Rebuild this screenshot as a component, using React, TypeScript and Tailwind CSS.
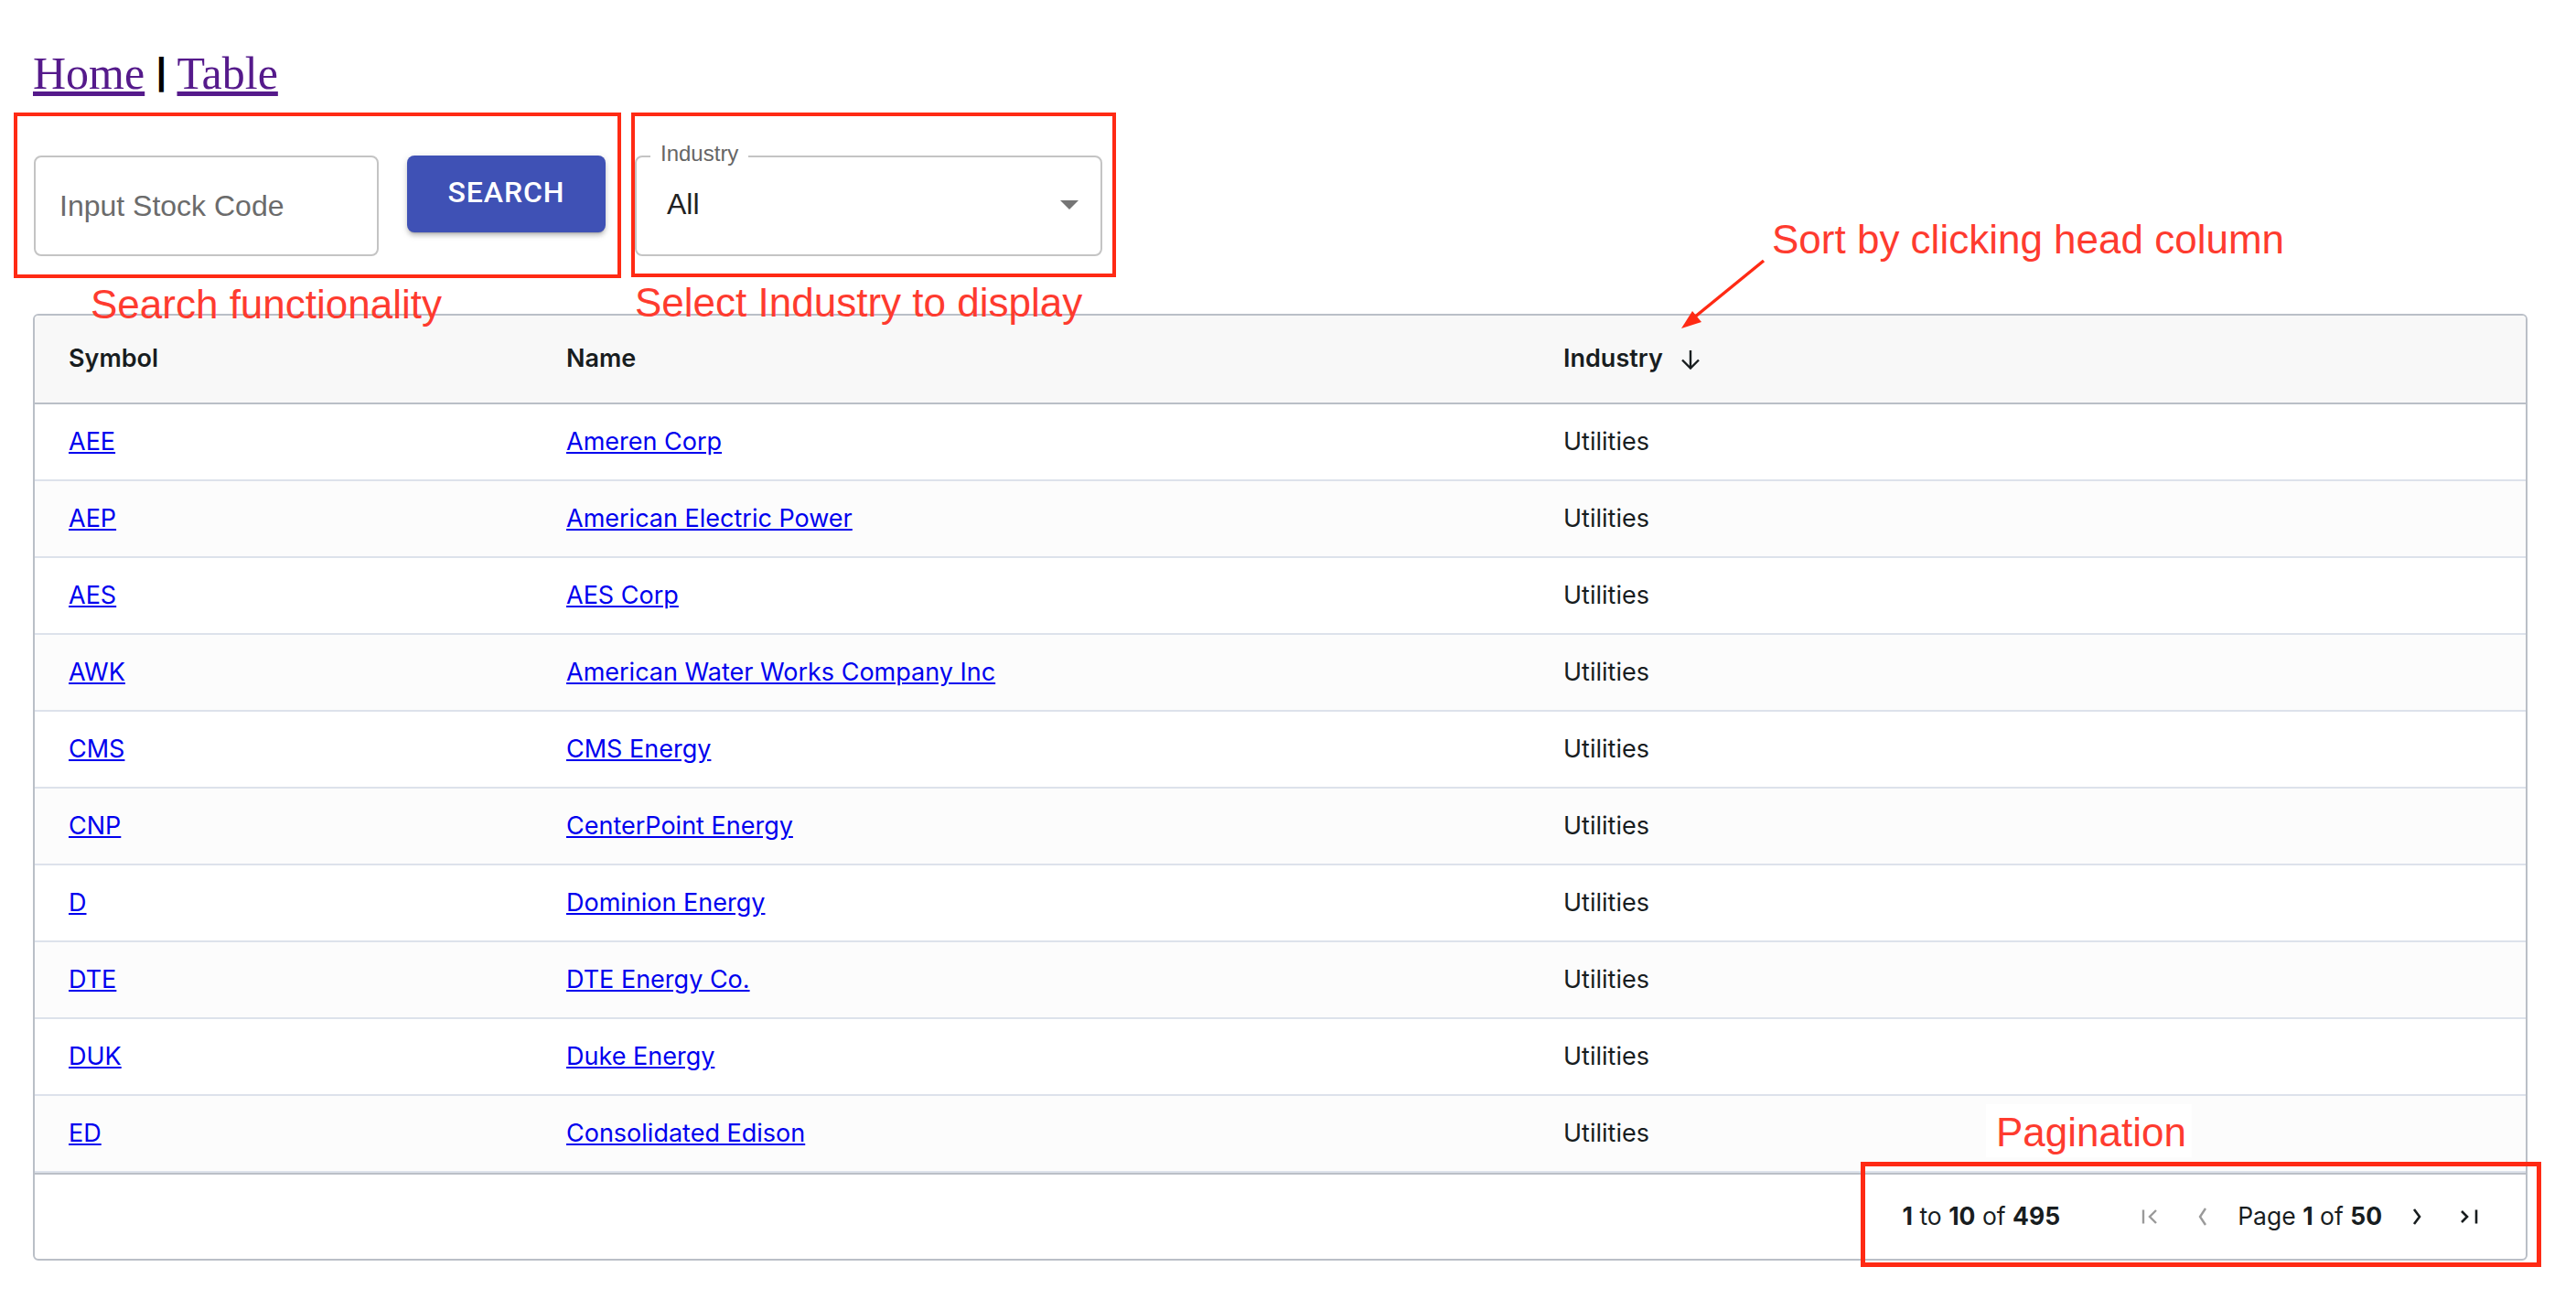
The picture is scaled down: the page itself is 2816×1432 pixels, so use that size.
import React from 'react';

interface Stock {
  symbol: string;
  name: string;
  industry: string;
}

const stocks: Stock[] = [
  { symbol: 'AEE', name: 'Ameren Corp', industry: 'Utilities' },
  { symbol: 'AEP', name: 'American Electric Power', industry: 'Utilities' },
  { symbol: 'AES', name: 'AES Corp', industry: 'Utilities' },
  { symbol: 'AWK', name: 'American Water Works Company Inc', industry: 'Utilities' },
  { symbol: 'CMS', name: 'CMS Energy', industry: 'Utilities' },
  { symbol: 'CNP', name: 'CenterPoint Energy', industry: 'Utilities' },
  { symbol: 'D', name: 'Dominion Energy', industry: 'Utilities' },
  { symbol: 'DTE', name: 'DTE Energy Co.', industry: 'Utilities' },
  { symbol: 'DUK', name: 'Duke Energy', industry: 'Utilities' },
  { symbol: 'ED', name: 'Consolidated Edison', industry: 'Utilities' },
];

const FirstIcon = () => (
  <svg width="32" height="32" viewBox="0 0 32 32" fill="none" stroke="#9a9a9a" strokeWidth={2.4}>
    <path d="M9 8.5v15" />
    <path d="M23 9l-7 7 7 7" />
  </svg>
);

const PrevIcon = () => (
  <svg width="32" height="32" viewBox="0 0 32 32" fill="none" stroke="#9a9a9a" strokeWidth={2.4}>
    <path d="M21 7l-6 9 6 9" />
  </svg>
);

const NextIcon = () => (
  <svg width="32" height="32" viewBox="0 0 32 32" fill="none" stroke="#181d1f" strokeWidth={2.6}>
    <path d="M11 8l6 8-6 8" />
  </svg>
);

const LastIcon = () => (
  <svg width="32" height="32" viewBox="0 0 32 32" fill="none" stroke="#181d1f" strokeWidth={2.6}>
    <path d="M7 10l6 6-6 6" />
    <path d="M23 8.5v15" />
  </svg>
);

export default function App() {
  return (
    <div className="relative h-screen overflow-hidden bg-white text-[#181d1f]">
      {/* nav */}
      <div className="pt-[55px] pl-[36px] h-[105px] text-[50px] leading-none font-['Liberation_Serif','Times_New_Roman',serif]">
        <a href="#" className="text-[#551a8b] underline">Home</a>
        <span className="text-black"> <span className="font-['Liberation_Sans',Arial,sans-serif] font-bold text-[40px] align-[5px]">|</span> </span>
        <a href="#" className="text-[#551a8b] underline">Table</a>
      </div>

      {/* search + filter */}
      <div className="mt-[65px] pl-[37px] flex items-start font-['Liberation_Sans',Arial,sans-serif]">
        <input
          placeholder="Input Stock Code"
          className="w-[377px] h-[110px] border-2 border-[#c4c4c4] rounded-[8px] pl-[26px] text-[32px] text-[#222] placeholder:text-[#6b6b6b] outline-none"
        />
        <button className="ml-[31px] w-[217px] h-[84px] pb-[4px] rounded-[8px] bg-[#3f51b5] text-white text-[32px] font-medium tracking-[0.9px] font-['Roboto',sans-serif] shadow-[0_3px_2px_-2px_rgba(0,0,0,0.2),0_4px_4px_0_rgba(0,0,0,0.14),0_2px_10px_0_rgba(0,0,0,0.12)]">
          SEARCH
        </button>
        <div className="relative ml-[32px] w-[511px] h-[110px] border-2 border-[#c4c4c4] rounded-[8px] flex items-center justify-between pl-[33px] pr-[10px] pb-[4px]">
          <span className="absolute left-[15px] top-[-16px] px-[11px] bg-white text-[24px] leading-none text-[#666]">
            Industry
          </span>
          <span className="text-[32px] text-[#222]">All</span>
          <svg width="48" height="48" viewBox="0 0 24 24" fill="#757575">
            <path d="M7 10l5 5 5-5z" />
          </svg>
        </div>
      </div>

      {/* grid */}
      <div className="ml-[36px] mr-[53px] mt-[63px] border-2 border-[#babfc7] rounded-[6px] overflow-hidden font-['Inter',sans-serif]">
        <div className="grid grid-cols-[544px_1090px_1fr] h-[97px] items-center bg-[#f8f8f8] border-b-2 border-[#babfc7] text-[27px] font-semibold">
          <div className="pl-[37px]">Symbol</div>
          <div className="pl-[37px]">Name</div>
          <div className="pl-[37px] flex items-center gap-[19px]">
            <span>Industry</span>
            <svg width="22" height="22" viewBox="0 0 22 22" fill="none" stroke="#181d1f" strokeWidth={2.4}>
              <path d="M11 1v19" />
              <path d="M2 11.5l9 9 9-9" />
            </svg>
          </div>
        </div>

        {stocks.map((s, i) => (
          <div
            key={s.symbol}
            className={`grid grid-cols-[544px_1090px_1fr] h-[84px] items-center border-b-2 border-[#dde2eb] text-[27px] ${i % 2 === 1 ? 'bg-[#fcfcfc]' : 'bg-white'}`}
          >
            <div className="pl-[37px]">
              <a href="#" className="text-[#0000ee] underline">{s.symbol}</a>
            </div>
            <div className="pl-[37px]">
              <a href="#" className="text-[#0000ee] underline">{s.name}</a>
            </div>
            <div className="pl-[37px]">{s.industry}</div>
          </div>
        ))}

        <div className="h-[94px] border-t-2 border-[#babfc7] flex items-center justify-end gap-[24px] pr-[45px] text-[26.5px]">
          <span className="mr-[58px]">
            <b>1</b> to <b>10</b> of <b>495</b>
          </span>
          <FirstIcon />
          <PrevIcon />
          <span>
            Page <b>1</b> of <b>50</b>
          </span>
          <NextIcon />
          <LastIcon />
        </div>
      </div>

      {/* annotations */}
      <div className="absolute left-[15px] top-[123px] w-[664px] h-[181px] border-4 border-[#ff2a14]" />
      <div className="absolute left-[690px] top-[123px] w-[530px] h-[180px] border-4 border-[#ff2a14]" />
      <div className="absolute left-[2034px] top-[1270px] w-[744px] h-[115px] border-[5px] border-[#ff2a14]" />

      <div className="absolute left-[99px] top-[311px] text-[44px] leading-none text-[#fe3b2f] font-['Liberation_Sans',Arial,sans-serif]">
        Search functionality
      </div>
      <div className="absolute left-[694px] top-[309px] text-[44px] leading-none text-[#fe3b2f] font-['Liberation_Sans',Arial,sans-serif]">
        Select Industry to display
      </div>
      <div className="absolute left-[1937px] top-[240px] text-[44px] leading-none text-[#fe3b2f] font-['Liberation_Sans',Arial,sans-serif]">
        Sort by clicking head column
      </div>
      <div className="absolute left-[2171px] top-[1207px] w-[225px] h-[58px] bg-white pl-[11px] pt-[9px] text-[44px] leading-none text-[#fe3b2f] font-['Liberation_Sans',Arial,sans-serif]">
        Pagination
      </div>

      <svg className="absolute left-[1830px] top-[278px]" width="110" height="90" viewBox="0 0 110 90">
        <line x1="98" y1="7" x2="22" y2="69" stroke="#ff2a14" strokeWidth="3.5" />
        <polygon points="8,81 20,62 30,74" fill="#ff2a14" />
      </svg>
    </div>
  );
}
